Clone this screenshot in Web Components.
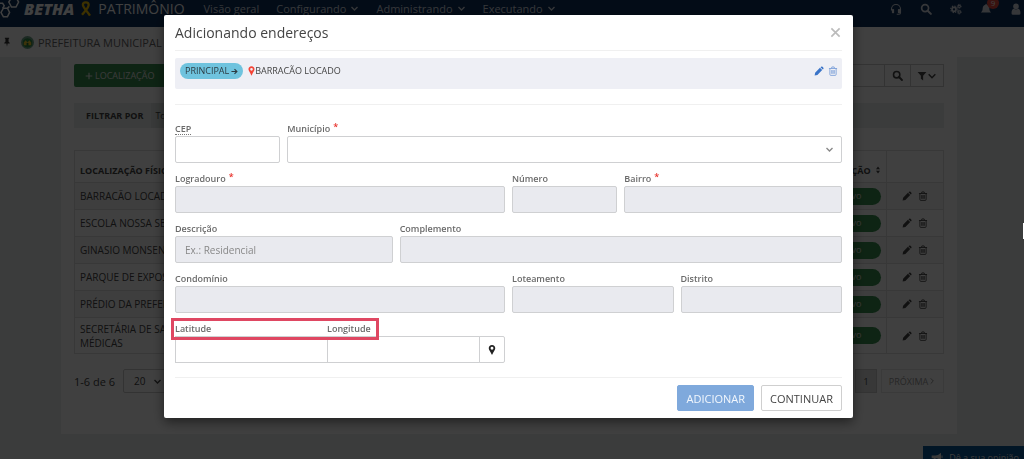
<!DOCTYPE html>
<html lang="pt-BR">
<head>
<meta charset="utf-8">
<meta name="viewport" content="width=device-width, initial-scale=1">
<title>Betha Patrimônio</title>
<style>
  html, body { height: 100%; }
  body {
    margin: 0;
    overflow: hidden;
    background: #e9efed;
    color: #444;
    font-family: "Open Sans", "Noto Sans", sans-serif;
    font-size: 10px;
  }
</style>
</head>
<body>
<patrimonio-app></patrimonio-app>

<script>
const ICONS = {
  hexes: ['0 0 20 20', '<g fill="none" stroke="currentColor" stroke-width="1.5"><path d="M11.5 -1.5 16 -1.5 18.6 3 16 8 11.5 8 8.8 3Z"/><path d="M3.4 9.2 7.4 9.2 9.6 13.4 7.4 17.8 3.4 17.8 1 13.4Z"/><path d="M-.5 4.2 2.6 4.2 4.2 6.8 2.6 9.4M7.4 9.4 9.4 7.4"/></g>'],
  ribbon: ['0 0 12 18', '<g fill="none" stroke="#f2c200" stroke-width="2.6"><path d="M10.5 16.500C8 12 2.500 7.500 2.500 4.200 2.500 1 8.500 .500 9 4 9.300 7.500 4 12 1.500 15.500"/></g>'],
  chevron: ['0 0 12 12', '<path d="M2 4l4 4 4-4" fill="none" stroke="currentColor" stroke-width="1.800"/>'],
  next: ['0 0 12 12', '<path d="M4 2l4 4-4 4" fill="none" stroke="currentColor" stroke-width="1.500"/>'],
  headset: ['0 0 16 16', '<path d="M2 10V8a6 6 0 0 1 12 0v5q0 2-2 2H9" fill="none" stroke="currentColor" stroke-width="1.500"/><rect x="2.500" y="8" width="3" height="5.500" rx="1" fill="currentColor"/><rect x="10.500" y="8" width="3" height="5.500" rx="1" fill="currentColor"/>'],
  search: ['0 0 16 16', '<circle cx="6.800" cy="6.800" r="4.600" fill="none" stroke="currentColor" stroke-width="2.300"/><path d="M10.200 10.200 14.500 14.500" stroke="currentColor" stroke-width="2.800" stroke-linecap="round"/>'],
  gears: ['0 0 18 16', '<g fill="none" stroke="currentColor"><circle cx="6" cy="8.500" r="3" stroke-width="2.400"/><circle cx="6" cy="8.500" r="4.900" stroke-width="1.700" stroke-dasharray="2 1.850"/><circle cx="13.800" cy="4" r="1.800" stroke-width="1.600"/><circle cx="13.800" cy="4" r="3" stroke-width="1.300" stroke-dasharray="1.400 1.300"/><circle cx="13.800" cy="12.500" r="1.800" stroke-width="1.600"/><circle cx="13.800" cy="12.500" r="3" stroke-width="1.300" stroke-dasharray="1.400 1.300"/></g>'],
  bell: ['0 0 16 16', '<path d="M8 1q1 0 1 1.200C12 3 12.500 5.500 12.500 8c0 2.200 1 3.500 2.300 4.500H1.200C2.500 11.500 3.500 10.200 3.500 8 3.500 5.500 4 3 7 2.200 7 1 8 1ZM6 13.300h4q-.3 2-2 2t-2-2Z" fill="currentColor"/>'],
  user: ['0 0 16 16', '<circle cx="8" cy="4.500" r="3.700" fill="currentColor"/><path d="M2 13.500C2 9.500 3.500 7.800 5 7.600q3 2 6 0c1.500.2 3 1.900 3 5.900q0 2-2 2H4q-2 0-2-2Z" fill="currentColor"/>'],
  pushpin: ['0 0 16 16', '<path d="M4.500 1h7v1.500l-1 .5v4.500q2 1 2 3H9L8 15.500 7 10.500H3.500q0-2 2-3V3l-1-.5Z" fill="currentColor"/>'],
  crest: ['0 0 14 14', '<circle cx="7" cy="7" r="7" fill="#6fa58a"/><path d="M2 5q5-5 10 0v5q-5 5-10 0Z" fill="#2f8a48"/><path d="M3 7l2-2.500L7 7l2-2.500L11 7v3H3Z" fill="#f0c92e"/><path d="M6 7.500h2v3H6Z" fill="#22713a"/>'],
  plus: ['0 0 12 12', '<path d="M6 1v10M1 6h10" stroke="currentColor" stroke-width="1.700"/>'],
  filter: ['0 0 16 16', '<path d="M1 1.500h14L9.800 7.500V15L6.200 12.300V7.500Z" fill="currentColor"/>'],
  sort: ['0 0 10 16', '<path d="M5 1l4 5.500H1ZM5 15l4-5.500H1Z" fill="currentColor"/>'],
  pencil: ['0 0 16 16', '<path d="M1 15l.8-4.400 7.700-7.700 3.600 3.600-7.700 7.700ZM10.400 2l1-1q1.200-.8 2.300.3l1 1q1.100 1.100.3 2.300l-1 1Z" fill="currentColor"/>'],
  trash: ['0 0 16 16', '<g fill="none" stroke="currentColor" stroke-width="1.400"><path d="M1.500 4h13M5.500 4l.7-2.500h3.600L10.500 4M3 4v9.500q0 1.500 1.300 1.500h7.400q1.300 0 1.300-1.500V4M6 6.500v6M8 6.500v6M10 6.500v6"/></g>'],
  marker: ['0 0 12 16', '<path fill-rule="evenodd" d="M6 0C2.700 0 .8 2.300.8 5.200.8 7.500 3 10 6 16c3-6 5.200-8.500 5.200-10.800C11.200 2.300 9.300 0 6 0Zm0 2.900a2.300 2.300 0 1 1 0 4.600 2.300 2.300 0 0 1 0-4.600Z" fill="currentColor"/>'],
  arrow: ['0 0 16 16', '<path d="M1 8h12M8 2.500 13.500 8 8 13.500" fill="none" stroke="currentColor" stroke-width="2.600"/>'],
  close: ['0 0 12 12', '<path d="M1.500 1.500l9 9M10.500 1.500l-9 9" stroke="currentColor" stroke-width="1.800"/>'],
  megaphone: ['0 0 18 16', '<path d="M1 5h6q4 0 8-4v12q-4-4-8-4v5H4V9H1Z" fill="currentColor"/><path d="M16.500 5v4" stroke="currentColor" stroke-width="1.500"/>']
};

const RESET = `
  *, *::before, *::after { box-sizing: border-box; }
  button, input, select { font: inherit; color: inherit; margin: 0; }
  button { display: inline-flex; align-items: center; justify-content: center; padding: 0; border: 0; background: none; cursor: pointer; }
  a { color: inherit; text-decoration: none; }
`;

class BaseElement extends HTMLElement {
  constructor() {
    super();
    const root = this.attachShadow({ mode: 'open' });
    const tpl = document.createElement('template');
    tpl.innerHTML = `<style>${RESET}${this.styles()}</style>${this.markup()}`;
    root.append(tpl.content.cloneNode(true));
  }
  styles() { return ''; }
  markup() { return ''; }
}

/* Inline SVG glyph chosen by its name attribute */
class UiIcon extends HTMLElement {
  constructor() { super(); this.attachShadow({ mode: 'open' }); }
  connectedCallback() {
    const [box, body] = ICONS[this.getAttribute('name')];
    this.shadowRoot.innerHTML = `<style>
      :host { display: inline-flex; flex: none; width: var(--w, var(--size, 10px)); height: var(--size, 10px); }
      svg { width: 100%; height: 100%; display: block; overflow: visible; }
    </style><svg viewBox="${box}" aria-hidden="true">${body}</svg>`;
  }
}
customElements.define('ui-icon', UiIcon);

class AppTopbar extends BaseElement {
  styles() { return `
    :host { display: block; background: #0d305c; color: #fff; height: 27px; }
    header { display: flex; align-items: center; height: 17px; padding-right: 2px; }
    .brand { display: flex; align-items: center; }
    .brand b { font-size: 16px; font-weight: 800; font-style: italic; line-height: 16px; margin: 0 6px 0 4px; }
    .brand ui-icon { --size: 20px; }
    .brand .ribbon { --size: 16px; --w: 12px; margin-right: 6px; }
    .product { font-size: 14px; }
    nav { display: flex; gap: 17px; margin-left: 19px; font-size: 11px; color: #d6dce4; line-height: 16px; }
    nav a { display: flex; align-items: center; gap: 4px; white-space: nowrap; }
    nav ui-icon { --size: 9px; }
    .tools { display: flex; gap: 18px; margin-left: auto; color: #d6dce4; }
    .tools button { position: relative; --size: 12px; }
    .count { position: absolute; left: 7px; top: -6px; width: 12px; height: 12px; border-radius: 50%; background: #e8483f; color: #fff; font-size: 8px; line-height: 12px; text-align: center; }
  `; }
  markup() { return `<header>
    <div class="brand"><ui-icon name="hexes"></ui-icon><b>BETHA</b><ui-icon class="ribbon" name="ribbon"></ui-icon><span class="product">PATRIMÔNIO</span></div>
    <nav>
      <a href="#">Visão geral</a>
      <a href="#">Configurando <ui-icon name="chevron"></ui-icon></a>
      <a href="#">Administrando <ui-icon name="chevron"></ui-icon></a>
      <a href="#">Executando <ui-icon name="chevron"></ui-icon></a>
    </nav>
    <div class="tools">
      <button aria-label="Suporte"><ui-icon name="headset"></ui-icon></button>
      <button aria-label="Pesquisar"><ui-icon name="search"></ui-icon></button>
      <button aria-label="Configurações"><ui-icon name="gears"></ui-icon></button>
      <button aria-label="Notificações"><ui-icon name="bell"></ui-icon><span class="count">9</span></button>
      <button aria-label="Usuário"><ui-icon name="user"></ui-icon></button>
    </div>
  </header>`; }
}
customElements.define('app-topbar', AppTopbar);

class EntityBar extends BaseElement {
  styles() { return `
    :host { display: flex; align-items: center; height: 30px; padding-left: 2px; background: #fff; font-size: 11px; color: #666; }
    .pin { --size: 10px; color: #333; }
    .crest { --size: 13px; margin: 0 4px 0 9px; }
  `; }
  markup() { return `<ui-icon class="pin" name="pushpin"></ui-icon><ui-icon class="crest" name="crest"></ui-icon><slot></slot>`; }
}
customElements.define('entity-bar', EntityBar);

const ROWS = ['BARRACÃO LOCADO', 'ESCOLA NOSSA SENHORA', 'GINASIO MONSENHOR', 'PARQUE DE EXPOSIÇÕES', 'PRÉDIO DA PREFEITURA', 'SECRETÁRIA DE SAÚDE<br>MÉDICAS'];

class LocationList extends BaseElement {
  styles() { return `
    :host { display: block; background: #fff; margin: 0 67px 0 61px; padding: 7px 13px 41px; }
    .bar { display: flex; justify-content: space-between; }
    .add { justify-content: flex-start; height: 23px; padding: 0 11px; gap: 2px; width: 100px; background: #388f50; color: #e8e8e8; font-size: 9px; border-radius: 2px; --size: 8px; }
    .find { display: flex; }
    .find input { width: 200px; height: 23px; border: 1px solid #ccc; border-right: 0; background: #fff; }
    .find button { width: 27px; border: 1px solid #ccc; --size: 11px; }
    .find button + button { width: 33px; border-left: 0; --size: 10px; }
    .filters { display: flex; height: 25px; margin: 16px 0 22px; background: #e9efed; font-size: 9px; line-height: 25px; }
    .filters b { padding: 0 8px 0 12px; }
    .filters span { padding: 0 4px; background: #dde3e1; }
    table { width: 100%; border-collapse: collapse; table-layout: fixed; }
    th, td { border: 1px solid #ddd; padding: 0 5px; text-align: left; height: 27px; line-height: 14px; }
    td:first-child, th:first-child { border-right: 0; }
    td:nth-child(2), th:nth-child(2) { border-left: 0; text-align: right; }
    th { height: 32px; font-size: 9px; padding-top: 8px; }
    th ui-icon { --size: 8px; --w: 6px; margin-left: 2px; }
    tr:last-child td { height: 36px; }
    tbody tr:nth-child(odd) { background: #f5f5f5; }
    .col-state { width: 160px; }
    .col-acts { width: 57px; }
    .pill { display: inline-block; height: 17px; width: 60px; border-radius: 9px; background: #388f50; color: #e8e8e8; font-size: 9px; line-height: 16px; text-align: center; vertical-align: middle; }
    .acts { display: flex; gap: 6px; justify-content: center; --size: 10px; }
    .foot { display: flex; justify-content: space-between; align-items: center; margin-top: 15px; }
    .size { display: flex; align-items: center; gap: 8px; font-size: 11px; }
    .pick { display: grid; align-items: center; }
    .pick > * { grid-area: 1 / 1; }
    .pick select { width: 46px; height: 24px; padding: 0 10px; appearance: none; border: 1px solid #ccc; border-radius: 2px; background: #fff; font-size: 10px; }
    .pick ui-icon { justify-self: end; margin-right: 7px; --size: 9px; pointer-events: none; }
    .pages { display: flex; gap: 4px; font-size: 9px; }
    .pages button { height: 24px; width: 22px; border: 1px solid #ccc; background: #ddd; }
    .pages button + button { width: 63px; background: #fff; border-color: #e8e8e8; color: #999; --size: 8px; }
  `; }
  markup() { return `
    <div class="bar">
      <button class="add"><ui-icon name="plus"></ui-icon>LOCALIZAÇÃO</button>
      <div class="find"><input type="search" aria-label="Pesquisar localização"><button aria-label="Buscar"><ui-icon name="search"></ui-icon></button><button aria-label="Filtros"><ui-icon name="filter"></ui-icon><ui-icon name="chevron"></ui-icon></button></div>
    </div>
    <div class="filters"><b>FILTRAR POR</b><span>Todos</span></div>
    <table>
      <colgroup><col><col class="col-state"><col class="col-acts"></colgroup>
      <thead><tr><th>LOCALIZAÇÃO FÍSICA</th><th>SITUAÇÃO <ui-icon name="sort"></ui-icon></th><th></th></tr></thead>
      <tbody>${ROWS.map(r => `<tr><td>${r}</td><td><span class="pill">Ativo</span></td><td><div class="acts"><button aria-label="Editar"><ui-icon name="pencil"></ui-icon></button><button aria-label="Excluir"><ui-icon name="trash"></ui-icon></button></div></td></tr>`).join('')}</tbody>
    </table>
    <div class="foot">
      <div class="size"><span>1-6 de 6</span><div class="pick"><select aria-label="Itens por página"><option>20</option></select><ui-icon name="chevron"></ui-icon></div></div>
      <div class="pages"><button>1</button><button>PRÓXIMA<ui-icon name="next"></ui-icon></button></div>
    </div>`; }
}
customElements.define('location-list', LocationList);

class FeedbackTab extends BaseElement {
  styles() { return `
    :host { position: fixed; right: 0; bottom: 0; height: 13px; overflow: hidden; background: #0a5796; color: #e8e8e8; font-size: 9px; }
    button { gap: 6px; padding: 5px 5px 0 8px; line-height: 13px; --size: 11px; --w: 12px; white-space: nowrap; }
  `; }
  markup() { return `<button><ui-icon name="megaphone"></ui-icon><slot></slot></button>`; }
}
customElements.define('feedback-tab', FeedbackTab);

/* Labelled control; set "as" to select for a drop-down */
class FormField extends HTMLElement {
  constructor() { super(); this.attachShadow({ mode: 'open' }); }
  connectedCallback() {
    const a = n => this.getAttribute(n);
    const off = this.hasAttribute('disabled') ? 'disabled' : '';
    const control = a('as') === 'select'
      ? `<select id="c" ${off}><option></option></select><ui-icon name="chevron"></ui-icon>`
      : `<input id="c" type="text" placeholder="${a('hint') || ''}" ${off}>`;
    const text = this.hasAttribute('abbr') ? `<abbr title="${a('abbr')}">${a('label')}</abbr>` : a('label');
    this.shadowRoot.innerHTML = `<style>${RESET}
      :host { display: block; grid-column: span var(--span, 2); min-width: 0; }
      label { display: flex; gap: 3px; height: 15px; line-height: 15px; font-size: 9px; font-weight: 600; color: #6a6a6a; }
      abbr { height: 14px; text-decoration: none; border-bottom: 1px dotted #777; }
      i { color: #e8302a; font-style: normal; line-height: 11px; }
      .box { display: grid; align-items: center; }
      .box > * { grid-area: 1 / 1; }
      input, select { width: 100%; height: 27px; padding: 0 9px; border: 1px solid #cfd0d2; border-radius: var(--radius, 2px); background: #fff; appearance: none; font-size: 10px; }
      :disabled { background: #e9eaef; opacity: 1; }
      ::placeholder { color: #888; opacity: 1; }
      ui-icon { justify-self: end; margin-right: 8px; --size: 9px; color: #888; pointer-events: none; }
    </style>
    <label for="c">${text}${this.hasAttribute('required') ? '<i>*</i>' : ''}</label>
    <div class="box">${control}</div>`;
  }
}
customElements.define('form-field', FormField);

/* Latitude and longitude joined to a map button */
class CoordinateGroup extends BaseElement {
  styles() { return `
    :host { display: flex; align-items: flex-end; position: relative; grid-column: span 6; }
    form-field { flex: 1; --radius: 0; }
    form-field + form-field { margin-left: -1px; }
    button { width: 26px; height: 27px; margin-left: -1px; border: 1px solid #cfd0d2; border-radius: 0 2px 2px 0; background: #fff; color: #222; --size: 10px; --w: 8px; }
    .mark { position: absolute; left: -4px; top: -3px; width: 208px; height: 22px; border: 3px solid #df4762; pointer-events: none; }
  `; }
  markup() { return `<form-field label="Latitude"></form-field><form-field label="Longitude"></form-field>
    <button aria-label="Selecionar no mapa"><ui-icon name="marker"></ui-icon></button><div class="mark"></div>`; }
}
customElements.define('coordinate-group', CoordinateGroup);

class AddressItem extends BaseElement {
  styles() { return `
    :host { display: flex; align-items: flex-start; height: 31px; padding: 5px 4px 5px 5px; background: #eeeff5; border-radius: 2px; font-size: 9px; line-height: 16px; }
    .tag { display: flex; align-items: center; gap: 2px; height: 16px; padding: 0 5px; border-radius: 8px; background: #6fc3de; color: #2c3b42; --size: 7px; }
    .name { display: flex; align-items: center; margin-left: 5px; }
    .name ui-icon { --size: 10px; --w: 7px; color: #f44336; }
    .acts { display: flex; gap: 4px; margin-left: auto; height: 16px; color: #3a74c8; --size: 10px; }
    .acts button + button { color: #7b9fd8; }
  `; }
  markup() { return `<span class="tag">PRINCIPAL <ui-icon name="arrow"></ui-icon></span>
    <span class="name"><ui-icon name="marker"></ui-icon><slot></slot></span>
    <span class="acts"><button aria-label="Editar endereço"><ui-icon name="pencil"></ui-icon></button><button aria-label="Excluir endereço"><ui-icon name="trash"></ui-icon></button></span>`; }
}
customElements.define('address-item', AddressItem);

class AddressDialog extends BaseElement {
  styles() { return `
    :host { position: fixed; inset: 0; display: flex; justify-content: center; align-items: flex-start; padding: 15px 7px 0 0; background: rgba(0, 0, 0, .75); }
    section { width: min(689px, 100%); padding: 0 11px 7px; background: #fff; border-radius: 2px; box-shadow: 0 4px 12px rgba(0, 0, 0, .5); }
    header { display: flex; justify-content: space-between; align-items: center; height: 36px; border-bottom: 1px solid #f0f0f0; margin-bottom: 7px; }
    h1 { margin: 0; font-size: 14px; font-weight: 400; line-height: 20px; }
    .close { color: #bbb; --size: 11px; padding: 2px 1px; }
    .form { display: grid; grid-template-columns: repeat(12, minmax(0, 1fr)); gap: 8px 7px; margin-top: 15px; padding: 16px 0 14px; border-top: 1px solid #f0f0f0; border-bottom: 1px solid #f0f0f0; }
    .s3 { --span: 3; } .s4 { --span: 4; } .s6 { --span: 6; } .s8 { --span: 8; } .s10 { --span: 10; }
    footer { display: flex; justify-content: flex-end; gap: 7px; padding-top: 7px; }
    footer button { height: 26px; padding: 0 8px; border: 1px solid #cfcfcf; border-radius: 2px; font-size: 11px; }
    footer .primary { background: #7fa9dc; border-color: #7fa9dc; color: #f2f7fd; }
  `; }
  markup() { return `<section role="dialog" aria-modal="true" aria-labelledby="t">
    <header><h1 id="t"><slot name="title"></slot></h1><button class="close" aria-label="Fechar"><ui-icon name="close"></ui-icon></button></header>
    <address-item>BARRACÃO LOCADO</address-item>
    <div class="form">
      <form-field label="CEP" abbr="Código de Endereçamento Postal"></form-field>
      <form-field class="s10" label="Município" as="select" required></form-field>
      <form-field class="s6" label="Logradouro" required disabled></form-field>
      <form-field label="Número" disabled></form-field>
      <form-field class="s4" label="Bairro" required disabled></form-field>
      <form-field class="s4" label="Descrição" hint="Ex.: Residencial" disabled></form-field>
      <form-field class="s8" label="Complemento" disabled></form-field>
      <form-field class="s6" label="Condomínio" disabled></form-field>
      <form-field class="s3" label="Loteamento" disabled></form-field>
      <form-field class="s3" label="Distrito" disabled></form-field>
      <coordinate-group></coordinate-group>
    </div>
    <footer><button class="primary">ADICIONAR</button><button>CONTINUAR</button></footer>
  </section>`; }
}
customElements.define('address-dialog', AddressDialog);

class PatrimonioApp extends BaseElement {
  styles() { return `
    :host { display: block; }
    .grip { position: fixed; right: 0; top: 223px; width: 1px; height: 16px; background: #fff; }
  `; }
  markup() { return `<app-topbar></app-topbar>
    <entity-bar>PREFEITURA MUNICIPAL DE</entity-bar>
    <location-list></location-list>
    <feedback-tab>Dê a sua opinião</feedback-tab>
    <address-dialog><span slot="title">Adicionando endereços</span></address-dialog>
    <div class="grip"></div>`; }
}
customElements.define('patrimonio-app', PatrimonioApp);
</script>
</body>
</html>
